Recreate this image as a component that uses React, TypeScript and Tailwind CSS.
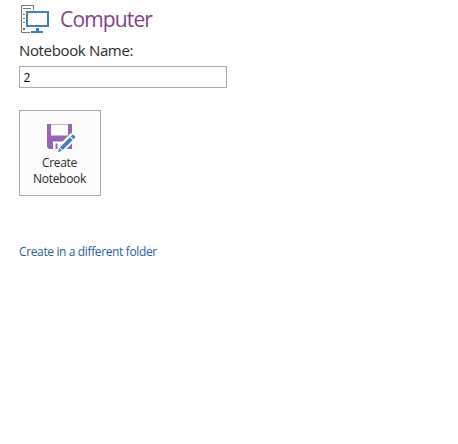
function ComputerIcon() {
  return (
    <svg width="30" height="30" viewBox="0 0 30 30" fill="none" aria-hidden="true">
      <path d="M13.500 5V.5H1.500V27.500H10" stroke="#777" />
      <path d="M3 3.500H11M3 9.500H5M3 13.500H5M3 17.500H5" stroke="#777" />
      <path d="M3 23H5V25H3Z" fill="#777" />
      <rect x="7" y="7" width="21" height="14" fill="#fff" stroke="#4080b8" strokeWidth="2" />
      <path d="M16 23H19V26H23V28H11V26H16Z" fill="#4080b8" />
    </svg>
  );
}

function SaveIcon() {
  return (
    <svg width="30" height="30" viewBox="0 0 30 30" aria-hidden="true">
      <path d="M0 0H25V25H2L0 23Z" fill="#9664b8" />
      <path d="M4 .5H21V11.500H4Z" fill="#fff" />
      <path d="M6 17.500H17V25H10.500V19.500H8.500V25H6Z" fill="#fff" />
      <path d="M10 28L12 21L24 9L30 14.500L17 27.500Z" fill="#fcfcfc" />
      <path d="M11 28L12.300 24L15 26.700ZM13 23.300L23 13.300L25.700 16L15.700 26ZM23.800 12.500L25.300 11Q26 10.400 26.700 11L28 12.300Q28.600 13 28 13.700L26.500 15.200Z" fill="#4080b8" />
    </svg>
  );
}

export default function App() {
  return (
    <main className="flex h-[444px] w-[458px] flex-col items-start overflow-hidden bg-white pl-[19px] pt-[5px] font-['Open_Sans','Noto_Sans',sans-serif] text-[#2b2b2b]">
      <header className="flex h-[30px] items-start pl-px">
        <ComputerIcon />
        <h1 className="-mt-px ml-[10px] text-[21px] leading-[30px] tracking-[-0.85px] text-[#85408a]">
          Computer
        </h1>
      </header>
      <label htmlFor="notebook" className="mt-1 h-[27px] whitespace-nowrap text-[15px] leading-[22px] tracking-[-0.35px]">
        Notebook Name:
      </label>
      <input
        id="notebook"
        defaultValue="2"
        className="h-[22px] w-[208px] border border-[#ababab] bg-white px-[3.500px] pt-px text-[12px] text-black outline-none"
      />
      <button className="mt-[22px] flex h-[86px] w-[82px] flex-col items-center border border-[#ababab] bg-[#fcfcfc] pr-px pt-[13px] text-[12px] font-medium leading-4 tracking-[-0.3px]">
        <span className="h-[31px] pl-1"><SaveIcon /></span>
        <span>Create</span>
        <span>Notebook</span>
      </button>
      <a href="#" className="mt-12 whitespace-nowrap text-[12px] leading-4 tracking-[-0.37px] text-[#2a609c]">
        Create in a different folder
      </a>
    </main>
  );
}
